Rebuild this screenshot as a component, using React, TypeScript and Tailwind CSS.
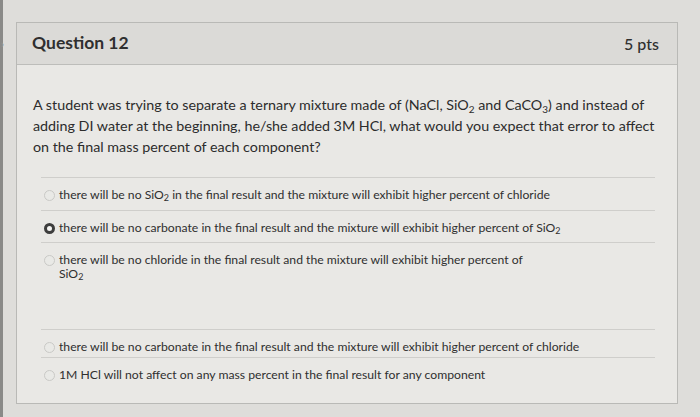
const options = [
  { id: 1, checked: false, h: 'h-[33px]', text: <>there will be no SiO<sub className="text-[9px] leading-none">2</sub> in the final result and the mixture will exhibit higher percent of chloride</> },
  { id: 2, checked: true, h: 'h-[32px]', text: <>there will be no carbonate in the final result and the mixture will exhibit higher percent of SiO<sub className="text-[9px] leading-none">2</sub></> },
  { id: 3, checked: false, h: 'h-[87px]', text: <>there will be no chloride in the final result and the mixture will exhibit higher percent of<br />SiO<sub className="text-[9px] leading-none">2</sub></> },
  { id: 4, checked: false, h: 'h-[28px]', text: <>there will be no carbonate in the final result and the mixture will exhibit higher percent of chloride</> },
  { id: 5, checked: false, h: 'h-[32px]', text: <>1M HCl will not affect on any mass percent in the final result for any component</> },
]

function Radio({ checked }: { checked: boolean }) {
  if (checked) {
    return <span className="mt-[2px] h-[11px] w-[11px] shrink-0 rounded-full border-[3px] border-[#3d3d3d] bg-[#f4f4f2]" />
  }
  return <span className="mt-[2px] h-[11px] w-[11px] shrink-0 rounded-full border border-[#c9c9c6] bg-[#e9e9e6]" />
}

export default function App() {
  return (
    <div
      className="relative h-[417px] w-[700px] overflow-hidden bg-[#deddda] pt-[22px] pl-[16px]"
      style={{ fontFamily: 'Lato, "Open Sans", sans-serif' }}
    >
      <div className="absolute left-0 top-0 h-full w-[3px] bg-[#8a8a88]" />
      <div className="absolute left-[1px] top-[36px] text-[11px] text-[#9a9a98]">›</div>
      <div className="h-[382px] w-[662px] border border-[#b9b9b6] bg-[#e9e8e5]">
        <div className="flex h-[42px] items-center justify-between border-b border-[#bdbdba] bg-[#dbdad7] pl-[15px] pr-[18px] text-[#2f2f2f]">
          <span className="text-[17.5px] font-bold">Question 12</span>
          <span className="text-[16px] font-medium">5 pts</span>
        </div>
        <div className="px-[16px] pt-[29px]">
          <p className="w-[640px] text-[14.3px] leading-[21px] text-[#2c2c2c]">
            A student was trying to separate a ternary mixture made of (NaCl, SiO<sub className="text-[10px] leading-none">2</sub> and CaCO<sub className="text-[10px] leading-none">3</sub>) and instead of adding DI water at the beginning, he/she added 3M HCl, what would you expect that error to affect on the final mass percent of each component?
          </p>
        </div>
        <div className="ml-[24px] mr-[22px] mt-[20px]">
          {options.map(o => (
            <div key={o.id} className={`${o.h} border-t border-[#cfcecb]`}>
              <div className="flex items-start gap-[4px] pl-[3px] pt-[10px] text-[12.2px] leading-[14px] text-[#2f2f2f]">
                <Radio checked={o.checked} />
                <span>{o.text}</span>
              </div>
            </div>
          ))}
        </div>
      </div>
    </div>
  )
}
